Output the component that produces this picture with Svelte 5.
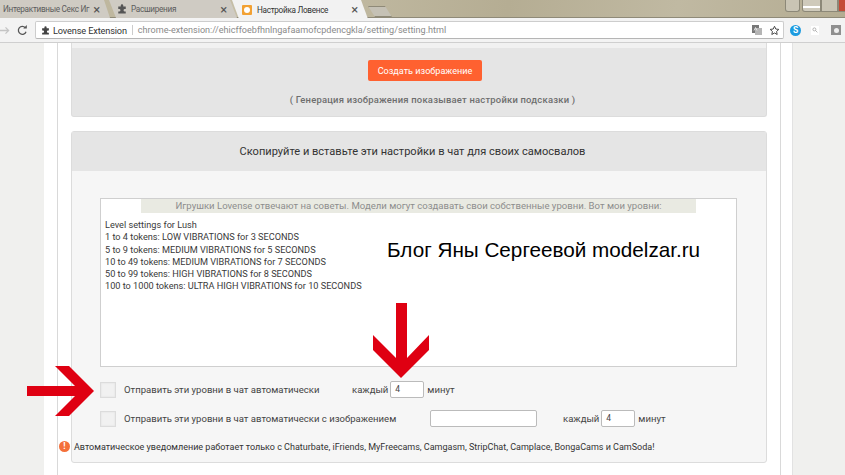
<script>
  const levels = [
    'Level settings for Lush',
    '1 to 4 tokens: LOW VIBRATIONS for 3 SECONDS',
    '5 to 9 tokens: MEDIUM VIBRATIONS for 5 SECONDS',
    '10 to 49 tokens: MEDIUM VIBRATIONS for 7 SECONDS',
    '50 to 99 tokens: HIGH VIBRATIONS for 8 SECONDS',
    '100 to 1000 tokens: ULTRA HIGH VIBRATIONS for 10 SECONDS'
  ];
</script>

<div class="screen">
  <div class="tabs">
    <div class="tab first"><span class="tab-title">Интерактивные Секс Иг</span><span class="close">×</span></div>
    <div class="tab second">
      <svg class="puzzle" viewBox="0 0 16 16"><path d="M6 2.500a2 2 0 0 1 4 0V4h4v4h-1.500a2 2 0 0 0 0 4H14v3H2v-3h1.500a2 2 0 0 0 0-4H2V4h4z" fill="#555"/></svg>
      <span class="tab-title">Расширения</span><span class="close">×</span>
    </div>
    <div class="tab active">
      <span class="favicon"><span></span></span>
      <span class="tab-title">Настройка Ловенсе</span><span class="close">×</span>
    </div>
    <div class="tab newtab"></div>
    <div class="winbtns">
      <span class="wb user"></span><span class="wb min"></span><span class="wb max"></span><span class="wb shut"></span>
    </div>
  </div>

  <div class="toolbar">
    <svg class="nav" viewBox="0 0 14 14"><path d="M0 7h11M7 3l4 4-4 4" fill="none" stroke="#c4c4c4" stroke-width="1.600"/></svg>
    <svg class="nav reload" viewBox="0 0 14 14"><path d="M11.500 8.500A5 5 0 1 1 10.500 3.500" fill="none" stroke="#555" stroke-width="1.600"/><path d="M8 4.500h4.500V0z" fill="#555"/></svg>
    <div class="omnibox">
      <svg class="puzzle small" viewBox="0 0 16 16"><path d="M6 2.500a2 2 0 0 1 4 0V4h4v4h-1.500a2 2 0 0 0 0 4H14v3H2v-3h1.500a2 2 0 0 0 0-4H2V4h4z" fill="#444"/></svg>
      <span class="origin">Lovense Extension</span>
      <span class="divider"></span>
      <span class="url">chrome-extension://ehicffoebfhnlngafaamofcpdencgkla/setting/setting.html</span>
      <svg class="translate" viewBox="0 0 10 10"><rect width="7" height="8" fill="#777"/><rect x="3" y="3" width="7" height="7" fill="#b5b5b5"/><path d="M2 5.500l1.500-3 1.500 3" fill="none" stroke="#eee" stroke-width=".8"/></svg>
      <svg class="star" viewBox="0 0 16 16"><path d="M8 1.800l1.900 4.100 4.400.5-3.300 3 .9 4.400L8 11.600l-3.900 2.200.9-4.400-3.300-3 4.400-.5z" fill="none" stroke="#444" stroke-width="1.400"/></svg>
    </div>
    <span class="skype">S</span>
    <span class="lens-box"><svg class="lens" viewBox="0 0 10 10"><circle cx="4" cy="4" r="2.500" fill="none" stroke="#999" stroke-width="1.200"/><path d="M6 6l3 3" stroke="#999" stroke-width="1.200"/></svg></span>
    <span class="ext-box"><span></span></span>
  </div>

  <div class="page">
    <div class="gutter"></div>
    <main class="sheet">
      <div class="column">
        <section class="panel top-panel">
          <div class="top-strip"></div>
          <button class="orange">Создать изображение</button>
          <p class="hint">( Генерация изображения показывает настройки подсказки )</p>
        </section>

        <section class="panel copy-panel">
          <h2>Скопируйте и вставьте эти настройки в чат для своих самосвалов</h2>
          <div class="copy-body">
            <div class="levels">
              <div class="notice">Игрушки Lovense отвечают на советы. Модели могут создавать свои собственные уровни. Вот мои уровни:</div>
              <ul>
                {#each levels as line}
                  <li>{line}</li>
                {/each}
              </ul>
            </div>

            <div class="option first-option">
              <span class="check"></span>
              <span class="label l1">Отправить эти уровни в чат автоматически</span>
              <span class="every">каждый</span>
              <span class="field num">4</span>
              <span class="unit">минут</span>
            </div>
            <div class="option">
              <span class="check"></span>
              <span class="label l2">Отправить эти уровни в чат автоматически с изображением</span>
              <span class="field wide"></span>
              <span class="every two">каждый</span>
              <span class="field num">4</span>
              <span class="unit">минут</span>
            </div>
            <div class="warning">
              <span class="bang">!</span>
              <span>Автоматическое уведомление работает только с Chaturbate, iFriends, MyFreecams, Camgasm, StripChat, Camplace, BongaCams и CamSoda!</span>
            </div>
          </div>
        </section>
      </div>
    </main>
    <div class="gutter right"></div>
  </div>

  <div class="blog">Блог Яны Сергеевой modelzar.ru</div>
  <svg class="arrow down" viewBox="0 0 56 75"><path d="M23 0h11v55l22-23v15L28 75 0 47V32l23 23z" fill="#df0012"/></svg>
  <svg class="arrow side" viewBox="0 0 67 50"><path d="M0 20h48L28 0h14l25 25-25 25H28l20-20H0z" fill="#df0012"/></svg>
</div>

<style>
  :global(body) {
    margin: 0;
    overflow: hidden;
  }
  .screen {
    position: relative;
    width: 845px;
    height: 475px;
    overflow: hidden;
    display: flex;
    flex-direction: column;
    font-family: Roboto, "Liberation Sans", sans-serif;
    background: #f0f0ee;
  }

  /* browser chrome */
  .tabs {
    height: 18px;
    flex: none;
    display: flex;
    background: linear-gradient(100deg, #b9b197, #c6bfa8 30%, #b5ad93 60%, #c0b9a2 80%, #b4ac92);
    border-bottom: 1px solid #8f8a78;
    box-sizing: border-box;
    font-size: 8.200px;
    letter-spacing: -0.3px;
    color: #5c5c5c;
  }
  .tab {
    display: flex;
    align-items: center;
    height: 18px;
    box-sizing: border-box;
    background: #cfcbc3;
    clip-path: polygon(0 0, calc(100% - 7px) 0, 100% 100%, 7px 100%);
  }
  .tab-title {
    flex: 1;
    white-space: nowrap;
    overflow: hidden;
  }
  .close {
    font-size: 13px;
    color: #555;
    margin-right: 10px;
    line-height: 1;
  }
  .tab.first {
    width: 110px;
    padding-left: 3px;
    clip-path: polygon(0 0, calc(100% - 6px) 0, 100% 100%, 0 100%);
  }
  .tab.second {
    width: 128px;
    margin-left: -1px;
    padding-left: 8px;
  }
  .puzzle {
    width: 10px;
    height: 10px;
    margin: 0 4px 0 0;
    flex: none;
  }
  .tab.active {
    width: 136px;
    margin-left: -5px;
    padding-left: 10px;
    height: 19px;
    background: #f2f2f2;
    color: #333;
    position: relative;
  }
  .favicon {
    width: 10px;
    height: 10px;
    margin-right: 5px;
    background: #f2a134;
    border-radius: 1px;
    display: flex;
    align-items: center;
    justify-content: center;
    flex: none;
  }
  .favicon span {
    width: 6px;
    height: 6px;
    background: #fff;
    border-radius: 50%;
  }
  .tab.newtab {
    width: 24px;
    height: 11px;
    margin: 6px 0 0 0;
    background: #c5c1b5;
    border: 1px solid #8f8a78;
  }
  .winbtns {
    margin-left: auto;
    display: flex;
    height: 12px;
  }
  .wb {
    display: block;
    height: 12px;
    box-sizing: border-box;
    border: 1px solid #8c8878;
    border-top: none;
    background: #c9c4b4;
  }
  .wb.user {
    width: 15px;
    border-radius: 0 0 3px 3px;
    margin-right: 2px;
  }
  .wb.min {
    width: 19px;
    border-radius: 0 0 0 3px;
    background: linear-gradient(#cfcabb 55%, #fff 55%, #fff 72%, #cfcabb 72%);
  }
  .wb.max {
    width: 17px;
  }
  .wb.shut {
    width: 7px;
    background: #c44a36;
    border-right: none;
  }

  .toolbar {
    height: 25px;
    flex: none;
    display: flex;
    align-items: center;
    background: #f3f3f3;
    border-bottom: 1px solid #cfcfcf;
    box-sizing: border-box;
  }
  .nav {
    width: 11px;
    height: 11px;
    flex: none;
  }
  .nav.reload {
    margin-left: 6px;
  }
  .omnibox {
    margin-left: 7px;
    width: 749px;
    height: 18px;
    box-sizing: border-box;
    background: #fff;
    border: 1px solid #cdcdcd;
    border-bottom-color: #b5b5b5;
    border-radius: 2px;
    display: flex;
    align-items: center;
    padding-left: 5px;
    font-size: 9.070px;
    flex: none;
  }
  .puzzle.small {
    margin: 0 3px 0 0;
    width: 9px;
    height: 9px;
  }
  .origin {
    color: #333;
    font-size: 9.200px;
    letter-spacing: -0.15px;
  }
  .divider {
    width: 1px;
    height: 10px;
    background: #ccc;
    margin: 0 5px 0 5px;
  }
  .url {
    color: #8a8a8a;
    flex: 1;
  }
  .translate {
    width: 10px;
    height: 10px;
    margin-right: 7px;
    display: block;
  }
  .star {
    width: 11px;
    height: 11px;
    margin-right: 3px;
  }
  .skype {
    margin-left: 6px;
    width: 11px;
    height: 11px;
    border-radius: 50%;
    background: #1c9be0;
    color: #fff;
    font-size: 8.500px;
    font-weight: 700;
    line-height: 11px;
    text-align: center;
    flex: none;
  }
  .lens-box {
    width: 8px;
    height: 9px;
    margin-left: 10px;
    background: #fff;
    display: flex;
    align-items: center;
    justify-content: center;
    flex: none;
  }
  .lens {
    width: 6px;
    height: 6px;
  }
  .ext-box {
    width: 10px;
    height: 10px;
    margin-left: 12px;
    background: #8f8f8f;
    flex: none;
    display: flex;
    align-items: center;
    justify-content: center;
  }
  .ext-box span {
    width: 5px;
    height: 5px;
    background: #eee;
    border-radius: 50%;
  }

  /* page */
  .page {
    flex: 1;
    min-height: 0;
    display: flex;
  }
  .gutter {
    width: 44px;
    flex: none;
    background: #f0f0ee;
  }
  .gutter.right {
    width: 53px;
    border-left: 1px solid #e2e2e2;
    box-sizing: border-box;
  }
  .sheet {
    width: 748px;
    flex: none;
    background: #fff;
    padding: 0 11px 0 13px;
    box-sizing: border-box;
  }
  .column {
    height: 100%;
    border-left: 1px solid #d9d9d9;
    border-right: 1px solid #d9d9d9;
    padding: 0 13px;
    box-sizing: border-box;
  }
  .panel {
    border: 1px solid #dcdcdc;
    border-radius: 3px;
    box-sizing: border-box;
  }
  .top-panel {
    height: 74px;
    background: #e5e5e5;
    border-top: none;
    border-radius: 0 0 3px 3px;
    text-align: center;
  }
  .top-strip {
    height: 5px;
    background: #f1f1f1;
  }
  .orange {
    display: block;
    margin: 12px 0 0 296px;
    width: 114px;
    height: 21px;
    padding: 0;
    border: none;
    border-radius: 2px;
    background: #ff6130;
    color: #fff;
    font-family: inherit;
    font-size: 9.100px;
  }
  .hint {
    margin: 12px 0 0 27px;
    font-size: 9.450px;
    line-height: 13px;
    color: #6e6e6e;
    font-weight: 500;
    letter-spacing: 0.2px;
  }
  .copy-panel {
    margin-top: 14px;
    height: 332px;
    background: #f6f6f6;
  }
  h2 {
    margin: 0;
    height: 39px;
    padding-right: 13px;
    background: #e5e5e5;
    font-weight: 400;
    font-size: 11.050px;
    line-height: 39px;
    text-align: center;
    color: #333;
  }
  .copy-body {
    padding: 27px 29px 0 28px;
  }
  .levels {
    height: 169px;
    box-sizing: border-box;
    background: #fff;
    border: 1px solid #cfcfcf;
  }
  .notice {
    margin-left: 40px;
    width: 555px;
    height: 14px;
    background: #e9eae2;
    font-size: 9.570px;
    line-height: 14px;
    color: #8d8d8d;
    text-align: center;
    white-space: nowrap;
  }
  ul {
    list-style: none;
    margin: 6px 0 0;
    padding: 0 0 0 4px;
    font-size: 9.170px;
    line-height: 12.300px;
    color: #3a3a3a;
  }
  .option {
    display: flex;
    align-items: center;
    margin-top: 12px;
    height: 17px;
    font-size: 9.550px;
    color: #444;
    white-space: nowrap;
  }
  .first-option {
    margin-top: 14px;
  }
  .check {
    width: 16px;
    height: 16px;
    box-sizing: border-box;
    border: 1px solid #dcdcdc;
    background: #f1f1f1;
    box-shadow: inset 0 0 2px #ddd;
    margin-right: 8px;
    flex: none;
  }
  .label.l1 {
    width: 228px;
  }
  .every {
    margin-right: 2px;
  }
  .field {
    box-sizing: border-box;
    height: 17px;
    background: #fff;
    border: 1px solid #bbb;
    border-radius: 2px;
    font-size: 8.500px;
    line-height: 15px;
    padding-left: 4px;
  }
  .field.num {
    width: 34px;
  }
  .label.l2 {
    width: 306px;
  }
  .field.wide {
    width: 107px;
  }
  .every.two {
    margin-left: 26px;
  }
  .unit {
    margin-left: 3px;
  }
  .warning {
    display: flex;
    align-items: center;
    margin: 14px 0 0 -41px;
    font-size: 9px;
    color: #333;
    white-space: nowrap;
  }
  .bang {
    width: 11px;
    height: 11px;
    border-radius: 50%;
    background: #f4703a;
    color: #fff;
    font-size: 8.500px;
    font-weight: 700;
    line-height: 11px;
    text-align: center;
    margin-right: 4px;
    flex: none;
  }

  /* annotations drawn over the screenshot */
  .blog {
    position: absolute;
    left: 387px;
    top: 238px;
    font-family: "Liberation Sans", Arial, sans-serif;
    font-size: 20.700px;
    line-height: 24px;
    color: #000;
    white-space: nowrap;
  }
  .arrow {
    position: absolute;
  }
  .arrow.down {
    left: 373px;
    top: 303px;
    width: 56px;
    height: 75px;
  }
  .arrow.side {
    left: 27px;
    top: 366px;
    width: 67px;
    height: 50px;
  }
</style>
